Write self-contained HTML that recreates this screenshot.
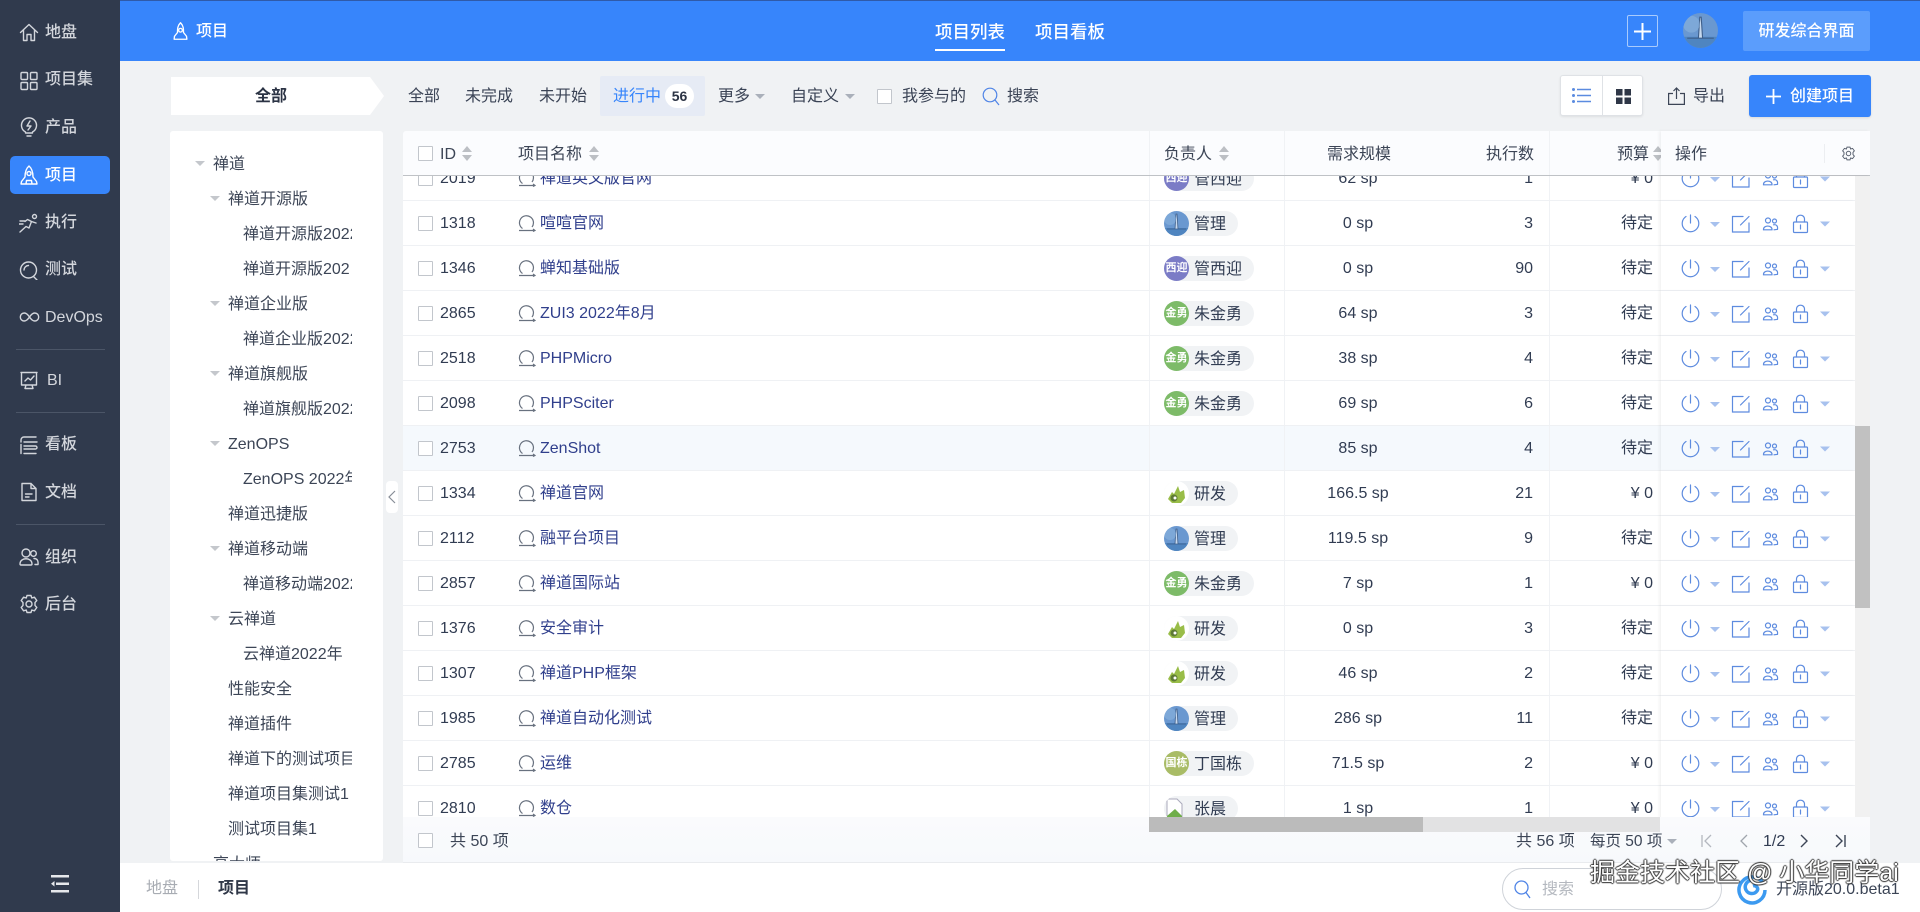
<!DOCTYPE html>
<html lang="zh"><head><meta charset="utf-8"><title>项目</title>
<style>
*{box-sizing:border-box}
html,body{margin:0;padding:0;width:1920px;height:912px;overflow:hidden;background:#f0f2f4;font:16px/1.2 "Liberation Sans","Noto Sans CJK SC",sans-serif;color:#313c52}
.a{position:absolute;white-space:nowrap}
#side{left:0;top:0;width:120px;height:912px;background:#303a4d}
#side .i{position:absolute;left:19px;width:20px;height:20px;fill:none;stroke:#d3d6dc;stroke-width:1.4;stroke-linecap:round;stroke-linejoin:round}
#side .l{position:absolute;left:45px;color:#d3d6dc;font-weight:500;line-height:24px;white-space:nowrap;margin-top:1px}
#side hr{position:absolute;left:16px;width:89px;margin:0;border:0;height:1px;background:#4b5567}
#hd{left:120px;top:0;width:1800px;height:61px;background:#3785fb;border-top:1px solid #2f5aa8}
.w{color:#fff}
.tab{top:19px;color:#fff;font-size:17.5px;font-weight:500;line-height:26px}
.f{top:85px;line-height:24px;color:#3a4355}
.car{position:absolute;width:0;height:0;border-left:5px solid transparent;border-right:5px solid transparent;border-top:5px solid #aab0ba}
.cb{position:absolute;width:15px;height:15px;background:#fff;border:1px solid #c2c6cc;border-radius:1px}
#tree{left:170px;top:131px;width:213px;height:730px;background:#fff;border-radius:3px;overflow:hidden}
#tw{position:absolute;left:0;top:0;width:182px;height:730px;overflow:hidden;padding-top:14.5px}
.t{position:relative;height:35px;line-height:37px;white-space:nowrap;color:#3c4556}
.t.c::before{content:"";position:absolute;top:15px;margin-left:-18px;border-left:5.5px solid transparent;border-right:5.5px solid transparent;border-top:5.5px solid #c4c7cc}
.l0{padding-left:43px}.l1{padding-left:58px}.l2{padding-left:73px}
#thead{left:403px;top:131px;width:1467px;height:45px;background:#fbfcfe;border-bottom:1px solid #bfc2c6;border-radius:3px 3px 0 0}
.th{position:absolute;top:131px;line-height:47px;color:#3c4556;white-space:nowrap}
#tb{left:0;top:176px;width:1855px;height:641px;overflow:hidden;clip-path:inset(0 0 0 403px)}
.r{position:absolute;left:0;width:1855px;height:45px;background:#fff;line-height:46px;white-space:nowrap}
.r::after{content:"";position:absolute;left:403px;right:0;bottom:0;height:1px;background:#eff1f4}
.r>div,.r>svg,.r>a{position:absolute}
.vl{top:0;bottom:0;width:1px;background:#f0f2f5}
.r .cb{left:418px;top:15px}
.id{left:440px}.ni{left:518px;top:13px;width:18px;height:18px}
.nm{left:540px;color:#303f8c;text-decoration:none}
.pill{left:1164px;top:10px;height:25px;line-height:27px;border-radius:13px;background:#f1f3f5;padding:0 12px 0 30px}
.av{left:1164px;top:10px;width:25px;height:25px;border-radius:50%;color:#fff;font-size:11px;font-weight:700;line-height:25px;text-align:center;overflow:hidden}
.sc{left:1284px;width:148px;text-align:center}
.ex{left:1450px;width:83px;text-align:right}
.bu{left:1560px;width:93px;text-align:right}
.op{left:1661px;top:0;width:194px;height:45px;background:#fff;box-shadow:-2px 0 3px rgba(0,0,0,.05);z-index:2;border-bottom:1px solid #eff1f4}
.op svg{position:absolute;left:19px;top:11px;width:150px;height:24px}
.hv{background:#f5f9fd}.hv .op{background:#f5f9fd}
</style></head><body>
<svg width="0" height="0" style="position:absolute">
<symbol id="ops" viewBox="0 0 150 24"><g fill="none" stroke="#5d8bdf" stroke-width="1.200" stroke-linecap="round"><path d="M6 4.500A8.300 8.300 0 1 0 15 4.500M10.500 3V11"/><path d="M63 4.500H52.500V20H69V11M69 4.500L60.500 13"/><circle cx="88" cy="8.500" r="2.500"/><circle cx="94.500" cy="9" r="2"/><path d="M83.500 17.800c-.5-5 9-5 8.500 0zM93.500 12.800c3-.5 4.500 1.200 4 4.500l-3.500.5"/><rect x="113.500" y="10" width="14" height="10.500" rx="1"/><path d="M116.500 10V6.800a4 3.600 0 0 1 8 0V10M120.500 13V17"/></g><path d="M30 10H40L35 15zM140 9.500H150L145 14.500z" fill="#a7c1ee"/></symbol>
<symbol id="ni" viewBox="0 0 18 18"><path d="M4.500 14.500A7 7 0 1 1 14 13M1 16.500H17M15 15l2 1.500-2 1" fill="none" stroke="#68717f" stroke-width="1.200"/></symbol>
<symbol id="sort" viewBox="0 0 10 15"><path d="M5 0L10 6H0zM5 15L0 9H10z" fill="#bcbfc4"/></symbol>
<symbol id="ph" viewBox="0 0 25 25"><rect width="25" height="25" fill="#6a98d0"/><rect y="17" width="25" height="8" fill="#4f85c0"/><path d="M12 3L11 18H14L13 3zM3 18H22" stroke="#3f5f8a" stroke-width=".8" fill="#c7d9ee"/><circle cx="6" cy="8" r="6" fill="#8bb2de" opacity=".6"/></symbol>
<symbol id="dr" viewBox="0 0 25 25"><rect width="25" height="25" fill="#fff"/><path d="M4 18L8 11L10 13L14 5L16 11L20 9L21 17L17 22H8z" fill="#99bd48"/><circle cx="10" cy="17" r="3.500" fill="#5e7a35"/><circle cx="11" cy="17" r="1.500" fill="#fff"/></symbol>
</svg>

<div id="side" class="a">
<svg class="i" style="top:22px" viewBox="0 0 20 20"><path d="M1.500 10.500L10 2.500L18.500 10.500M4.500 8V18.500H8V12.500H12V18.500H15.500V8"/></svg><div class="l" style="top:20px">地盘</div>
<svg class="i" style="top:71px" viewBox="0 0 20 20"><rect x="2" y="1.500" width="6.500" height="7" rx="1"/><rect x="11.500" y="1.500" width="6.500" height="7" rx="1"/><rect x="2" y="11.500" width="6.500" height="7" rx="1"/><rect x="11.500" y="11.500" width="6.500" height="7" rx="1"/></svg><div class="l" style="top:67px">项目集</div>
<svg class="i" style="top:117px" viewBox="0 0 20 20"><path d="M6.500 15A7.500 7.500 0 1 1 13.500 15V16H6.500ZM8 19H12M11 4L8 9H12L9 13"/></svg><div class="l" style="top:115px">产品</div>
<div style="position:absolute;left:10px;top:156px;width:100px;height:38px;background:#3785fb;border-radius:5px"></div>
<svg class="i" style="top:165px;stroke:#fff" viewBox="0 0 20 20"><path d="M10 1C6.500 4 6 8 6 12L2.500 16.500L2 19H18L17.500 16.500L14 12C14 8 13.500 4 10 1ZM7 19L7.500 15.500H12.500L13 19"/><circle cx="10" cy="8.500" r="2"/></svg><div class="l" style="top:163px;color:#fff">项目</div>
<svg class="i" style="top:213px" viewBox="0 0 20 20"><circle cx="15.500" cy="3.500" r="2"/><path d="M1 19L7 13.500L10 15L12.500 8.500L17 10M12.500 8.500L8.500 6.500L6 8.500M1 8H6M0 11H4"/></svg><div class="l" style="top:210px">执行</div>
<svg class="i" style="top:260px" viewBox="0 0 20 20"><circle cx="9.500" cy="10" r="8"/><path d="M14.500 16.500L18 20M5 10A4.500 4.500 0 0 1 9.500 5.500"/></svg><div class="l" style="top:257px">测试</div>
<svg class="i" style="top:307px;width:21px" viewBox="0 0 20 20"><path d="M10 10C8 7 6.500 6 4.800 6a4 4 0 0 0 0 8c1.700 0 3.200-1 5.200-4c2-3 3.500-4 5.200-4a4 4 0 0 1 0 8c-1.700 0-3.200-1-5.200-4z"/></svg><div class="l" style="top:305px;font-weight:400">DevOps</div>
<hr style="top:349px">
<svg class="i" style="top:370px" viewBox="0 0 20 20"><path d="M2 2.500H18M2.500 2.500V15H17.500V2.500M6 11L9 8L11.500 10L15 6M7 15L6 18.500H14L13 15"/></svg><div class="l" style="top:368px;left:47px;font-weight:400">BI</div>
<hr style="top:412px">
<svg class="i" style="top:435px" viewBox="0 0 20 20"><path d="M2 7V5a3 3 0 0 1 3-3H17M2 9.500V18.500M5 7H18M5 11H16.500a1.500 1.500 0 0 1 0 3H5M5 18.500H17"/></svg><div class="l" style="top:432px">看板</div>
<svg class="i" style="top:482px" viewBox="0 0 20 20"><path d="M3 1.500H12L17 6.500V18.500H3ZM12 1.500V6.500H17M6.500 12H13M6.500 15H10"/></svg><div class="l" style="top:480px">文档</div>
<hr style="top:524px">
<svg class="i" style="top:547px" viewBox="0 0 20 20"><circle cx="7" cy="6" r="4"/><path d="M1 17c0-7 12-7 12 0q0 1-1 1H2q-1 0-1-1z"/><circle cx="14.500" cy="6.500" r="2.800"/><path d="M15 11.500c3 0 4.500 2 4 6h-3"/></svg><div class="l" style="top:545px">组织</div>
<svg class="i" style="top:594px" viewBox="0 0 20 20"><path d="M8 1.500H12L12.800 4L15.400 3.200L17.800 6.500L16 8.600L16 11.400L17.800 13.500L15.400 16.800L12.800 16L12 18.500H8L7.200 16L4.600 16.800L2.200 13.500L4 11.400V8.600L2.200 6.500L4.600 3.200L7.200 4Z"/><circle cx="10" cy="10" r="3"/></svg><div class="l" style="top:592px">后台</div>
<svg style="position:absolute;left:51px;top:875px" width="18" height="18" viewBox="0 0 18 18"><path d="M0 0H18V2.500H0zM5 7.500H18V10H5zM0 15H18V17.500H0zM0 8.700L3.500 6V11.500z" fill="#e6e8ec"/></svg>
</div>

<div id="hd" class="a"></div>
<svg class="a" style="left:173px;top:22px;fill:none;stroke:#fff;stroke-width:1.800;stroke-linejoin:round" width="15" height="18" viewBox="0 0 20 24"><path d="M10 1C6 5 6 9 6 14L2 19L1.500 23H18.500L18 19L14 14C14 9 14 5 10 1Z"/><circle cx="10" cy="11" r="2.500"/></svg>
<div class="a w" style="left:196px;top:19px;line-height:26px;font-weight:500">项目</div>
<div class="a tab" style="left:935px">项目列表</div>
<div class="a" style="left:935px;top:49px;width:70px;height:2px;background:#fff"></div>
<div class="a tab" style="left:1035px">项目看板</div>
<div class="a" style="left:1627px;top:15px;width:31px;height:32px;border:1px solid #a9cbfd;border-radius:2px"></div>
<svg class="a" style="left:1634px;top:23px" width="17" height="17"><path d="M8.500 0V17M0 8.500H17" stroke="#fff" stroke-width="2"/></svg>
<svg class="a" style="left:1683px;top:13px;border-radius:50%" width="35" height="35" viewBox="0 0 25 25"><use href="#ph"/></svg>
<div class="a w" style="left:1743px;top:11px;width:127px;height:40px;line-height:41px;background:#5b9dfc;border-radius:2px;text-align:center;font-weight:500">研发综合界面</div>

<div class="a" style="left:171px;top:77px;width:213px;height:38px;background:#fff;clip-path:polygon(0 0,199px 0,100% 50%,199px 100%,0 100%);text-align:center;line-height:40px;padding-right:13px;font-weight:700;color:#2b3344">全部</div>
<div class="a f" style="left:408px">全部</div>
<div class="a f" style="left:465px">未完成</div>
<div class="a f" style="left:539px">未开始</div>
<div class="a" style="left:600px;top:76px;width:105px;height:40px;background:#e6ebf5;border-radius:2px"></div>
<div class="a f" style="left:613px;color:#3785fb">进行中</div>
<div class="a" style="left:665px;top:84px;width:29px;height:24px;border-radius:12px;background:#fff;text-align:center;line-height:24px;font-size:14px;font-weight:700;color:#2b3344">56</div>
<div class="a f" style="left:718px">更多</div><div class="car" style="left:755px;top:94px"></div>
<div class="a f" style="left:791px">自定义</div><div class="car" style="left:845px;top:94px"></div>
<div class="cb" style="left:877px;top:89px"></div>
<div class="a f" style="left:902px">我参与的</div>
<svg class="a" style="left:982px;top:87px" width="18" height="19" fill="none" stroke="#4f84e6" stroke-width="1.200"><circle cx="8" cy="8" r="6.800"/><path d="M13 13L17 18"/></svg>
<div class="a f" style="left:1007px">搜索</div>

<div class="a" style="left:1560px;top:75px;width:83px;height:41px;background:#fff;border:1px solid #dfe2e6;border-radius:3px;box-shadow:0 1px 2px rgba(0,0,0,.08)"></div>
<div class="a" style="left:1602px;top:75px;width:1px;height:41px;background:#dfe2e6"></div>
<svg class="a" style="left:1572px;top:87px" width="19" height="17"><path d="M5 2.500H19M5 8.500H19M5 14.500H19" stroke="#5b8be0" stroke-width="1.500"/><circle cx="1.500" cy="2.500" r="1.500" fill="#5b8be0"/><circle cx="1.500" cy="8.500" r="1.500" fill="#5b8be0"/><circle cx="1.500" cy="14.500" r="1.500" fill="#5b8be0"/></svg>
<svg class="a" style="left:1616px;top:89px" width="15" height="15"><path d="M0 0H6.500V6.500H0zM8.500 0H15V6.500H8.500zM0 8.500H6.500V15H0zM8.500 8.500H15V15H8.500z" fill="#2f3747"/></svg>
<svg class="a" style="left:1668px;top:87px" width="17" height="18" fill="none" stroke="#3c4556" stroke-width="1.200"><path d="M5 6.500H.6V17.400H16.400V6.500H12M8.500 12V1M5.500 4L8.500 1L11.500 4"/></svg>
<div class="a f" style="left:1693px">导出</div>
<div class="a w" style="left:1749px;top:75px;width:122px;height:42px;background:#3785fb;border-radius:3px;box-shadow:0 1px 2px rgba(0,0,0,.1);line-height:44px;padding-left:41px;font-weight:500">创建项目</div>
<svg class="a" style="left:1766px;top:89px" width="15" height="15"><path d="M7.500 0V15M0 7.500H15" stroke="#fff" stroke-width="1.800"/></svg>

<div id="tree" class="a"><div id="tw">
<div class="t c l0">禅道</div>
<div class="t c l1">禅道开源版</div>
<div class="t l2">禅道开源版2022年</div>
<div class="t l2">禅道开源版202</div>
<div class="t c l1">禅道企业版</div>
<div class="t l2">禅道企业版2022年</div>
<div class="t c l1">禅道旗舰版</div>
<div class="t l2">禅道旗舰版2022年</div>
<div class="t c l1">ZenOPS</div>
<div class="t l2">ZenOPS 2022年</div>
<div class="t l1">禅道迅捷版</div>
<div class="t c l1">禅道移动端</div>
<div class="t l2">禅道移动端2022年</div>
<div class="t c l1">云禅道</div>
<div class="t l2">云禅道2022年</div>
<div class="t l1">性能安全</div>
<div class="t l1">禅道插件</div>
<div class="t l1">禅道下的测试项目</div>
<div class="t l1">禅道项目集测试1</div>
<div class="t l1">测试项目集1</div>
<div class="t l0">高大师</div>
</div></div>
<div class="a" style="left:386px;top:481px;width:12px;height:32px;background:#fff;border-radius:4px"></div>
<svg class="a" style="left:388px;top:490px" width="8" height="14" fill="none" stroke="#888e98" stroke-width="1.200"><path d="M7 1L1 7L7 13"/></svg>

<div id="tb" class="a">
<div class="r" style="top:-20px"><div class="cb"></div><div class="id">2019</div><svg class="ni"><use href="#ni"/></svg><a class="nm">禅道英文版官网</a><div class="vl" style="left:1149px"></div><div class="vl" style="left:1284px"></div><div class="vl" style="left:1549px"></div><div class="pill">管西迎</div><div class="av" style="background:#7b7cc6">西迎</div><div class="sc">62 sp</div><div class="ex">1</div><div class="bu">¥ 0</div><div class="op"><svg><use href="#ops"/></svg></div></div>
<div class="r" style="top:25px"><div class="cb"></div><div class="id">1318</div><svg class="ni"><use href="#ni"/></svg><a class="nm">喧喧官网</a><div class="vl" style="left:1149px"></div><div class="vl" style="left:1284px"></div><div class="vl" style="left:1549px"></div><div class="pill">管理</div><svg class="av" viewBox="0 0 25 25"><use href="#ph"/></svg><div class="sc">0 sp</div><div class="ex">3</div><div class="bu">待定</div><div class="op"><svg><use href="#ops"/></svg></div></div>
<div class="r" style="top:70px"><div class="cb"></div><div class="id">1346</div><svg class="ni"><use href="#ni"/></svg><a class="nm">蝉知基础版</a><div class="vl" style="left:1149px"></div><div class="vl" style="left:1284px"></div><div class="vl" style="left:1549px"></div><div class="pill">管西迎</div><div class="av" style="background:#7b7cc6">西迎</div><div class="sc">0 sp</div><div class="ex">90</div><div class="bu">待定</div><div class="op"><svg><use href="#ops"/></svg></div></div>
<div class="r" style="top:115px"><div class="cb"></div><div class="id">2865</div><svg class="ni"><use href="#ni"/></svg><a class="nm">ZUI3 2022年8月</a><div class="vl" style="left:1149px"></div><div class="vl" style="left:1284px"></div><div class="vl" style="left:1549px"></div><div class="pill">朱金勇</div><div class="av" style="background:#7dbb68">金勇</div><div class="sc">64 sp</div><div class="ex">3</div><div class="bu">待定</div><div class="op"><svg><use href="#ops"/></svg></div></div>
<div class="r" style="top:160px"><div class="cb"></div><div class="id">2518</div><svg class="ni"><use href="#ni"/></svg><a class="nm">PHPMicro</a><div class="vl" style="left:1149px"></div><div class="vl" style="left:1284px"></div><div class="vl" style="left:1549px"></div><div class="pill">朱金勇</div><div class="av" style="background:#7dbb68">金勇</div><div class="sc">38 sp</div><div class="ex">4</div><div class="bu">待定</div><div class="op"><svg><use href="#ops"/></svg></div></div>
<div class="r" style="top:205px"><div class="cb"></div><div class="id">2098</div><svg class="ni"><use href="#ni"/></svg><a class="nm">PHPSciter</a><div class="vl" style="left:1149px"></div><div class="vl" style="left:1284px"></div><div class="vl" style="left:1549px"></div><div class="pill">朱金勇</div><div class="av" style="background:#7dbb68">金勇</div><div class="sc">69 sp</div><div class="ex">6</div><div class="bu">待定</div><div class="op"><svg><use href="#ops"/></svg></div></div>
<div class="r hv" style="top:250px"><div class="cb"></div><div class="id">2753</div><svg class="ni"><use href="#ni"/></svg><a class="nm">ZenShot</a><div class="vl" style="left:1149px"></div><div class="vl" style="left:1284px"></div><div class="vl" style="left:1549px"></div><div class="sc">85 sp</div><div class="ex">4</div><div class="bu">待定</div><div class="op"><svg><use href="#ops"/></svg></div></div>
<div class="r" style="top:295px"><div class="cb"></div><div class="id">1334</div><svg class="ni"><use href="#ni"/></svg><a class="nm">禅道官网</a><div class="vl" style="left:1149px"></div><div class="vl" style="left:1284px"></div><div class="vl" style="left:1549px"></div><div class="pill">研发</div><svg class="av" viewBox="0 0 25 25"><use href="#dr"/></svg><div class="sc">166.5 sp</div><div class="ex">21</div><div class="bu">¥ 0</div><div class="op"><svg><use href="#ops"/></svg></div></div>
<div class="r" style="top:340px"><div class="cb"></div><div class="id">2112</div><svg class="ni"><use href="#ni"/></svg><a class="nm">融平台项目</a><div class="vl" style="left:1149px"></div><div class="vl" style="left:1284px"></div><div class="vl" style="left:1549px"></div><div class="pill">管理</div><svg class="av" viewBox="0 0 25 25"><use href="#ph"/></svg><div class="sc">119.5 sp</div><div class="ex">9</div><div class="bu">待定</div><div class="op"><svg><use href="#ops"/></svg></div></div>
<div class="r" style="top:385px"><div class="cb"></div><div class="id">2857</div><svg class="ni"><use href="#ni"/></svg><a class="nm">禅道国际站</a><div class="vl" style="left:1149px"></div><div class="vl" style="left:1284px"></div><div class="vl" style="left:1549px"></div><div class="pill">朱金勇</div><div class="av" style="background:#7dbb68">金勇</div><div class="sc">7 sp</div><div class="ex">1</div><div class="bu">¥ 0</div><div class="op"><svg><use href="#ops"/></svg></div></div>
<div class="r" style="top:430px"><div class="cb"></div><div class="id">1376</div><svg class="ni"><use href="#ni"/></svg><a class="nm">安全审计</a><div class="vl" style="left:1149px"></div><div class="vl" style="left:1284px"></div><div class="vl" style="left:1549px"></div><div class="pill">研发</div><svg class="av" viewBox="0 0 25 25"><use href="#dr"/></svg><div class="sc">0 sp</div><div class="ex">3</div><div class="bu">待定</div><div class="op"><svg><use href="#ops"/></svg></div></div>
<div class="r" style="top:475px"><div class="cb"></div><div class="id">1307</div><svg class="ni"><use href="#ni"/></svg><a class="nm">禅道PHP框架</a><div class="vl" style="left:1149px"></div><div class="vl" style="left:1284px"></div><div class="vl" style="left:1549px"></div><div class="pill">研发</div><svg class="av" viewBox="0 0 25 25"><use href="#dr"/></svg><div class="sc">46 sp</div><div class="ex">2</div><div class="bu">待定</div><div class="op"><svg><use href="#ops"/></svg></div></div>
<div class="r" style="top:520px"><div class="cb"></div><div class="id">1985</div><svg class="ni"><use href="#ni"/></svg><a class="nm">禅道自动化测试</a><div class="vl" style="left:1149px"></div><div class="vl" style="left:1284px"></div><div class="vl" style="left:1549px"></div><div class="pill">管理</div><svg class="av" viewBox="0 0 25 25"><use href="#ph"/></svg><div class="sc">286 sp</div><div class="ex">11</div><div class="bu">待定</div><div class="op"><svg><use href="#ops"/></svg></div></div>
<div class="r" style="top:565px"><div class="cb"></div><div class="id">2785</div><svg class="ni"><use href="#ni"/></svg><a class="nm">运维</a><div class="vl" style="left:1149px"></div><div class="vl" style="left:1284px"></div><div class="vl" style="left:1549px"></div><div class="pill">丁国栋</div><div class="av" style="background:#a9bc66">国栋</div><div class="sc">71.5 sp</div><div class="ex">2</div><div class="bu">¥ 0</div><div class="op"><svg><use href="#ops"/></svg></div></div>
<div class="r" style="top:610px"><div class="cb"></div><div class="id">2810</div><svg class="ni"><use href="#ni"/></svg><a class="nm">数仓</a><div class="vl" style="left:1149px"></div><div class="vl" style="left:1284px"></div><div class="vl" style="left:1549px"></div><div class="pill">张晨</div><svg class="av" viewBox="0 0 25 25"><rect width="25" height="25" fill="#f1f3f5"/><path d="M3 3H13L18 8V25H3Z" fill="#fff" stroke="#aab"/><path d="M3 20L11 13L18 20V25H3Z" fill="#6fae4a"/></svg><div class="sc">1 sp</div><div class="ex">1</div><div class="bu">¥ 0</div><div class="op"><svg><use href="#ops"/></svg></div></div>
</div>
<div class="a" style="left:1855px;top:176px;width:15px;height:641px;background:#f1f1f1"></div>
<div class="a" style="left:1855px;top:426px;width:15px;height:182px;background:#c1c1c1"></div>

<div id="thead" class="a"></div>
<div class="a" style="left:1149px;top:131px;width:1px;height:44px;background:#f0f2f5"></div>
<div class="a" style="left:1284px;top:131px;width:1px;height:44px;background:#f0f2f5"></div>
<div class="a" style="left:1549px;top:131px;width:1px;height:44px;background:#f0f2f5"></div>
<div class="cb" style="left:418px;top:146px"></div>
<div class="th" style="left:440px">ID</div><svg class="a" style="left:462px;top:146px" width="10" height="15"><use href="#sort"/></svg>
<div class="th" style="left:518px">项目名称</div><svg class="a" style="left:589px;top:146px" width="10" height="15"><use href="#sort"/></svg>
<div class="th" style="left:1164px">负责人</div><svg class="a" style="left:1219px;top:146px" width="10" height="15"><use href="#sort"/></svg>
<div class="th" style="left:1327px">需求规模</div>
<div class="th" style="left:1486px">执行数</div>
<div class="th" style="left:1617px">预算</div><svg class="a" style="left:1653px;top:146px" width="10" height="15"><use href="#sort"/></svg>
<div class="a" style="left:1661px;top:131px;width:209px;height:44px;background:#fbfcfe;box-shadow:-2px 0 3px rgba(0,0,0,.05)"></div>
<div class="th" style="left:1675px">操作</div>
<div class="a" style="left:1824px;top:144px;width:1px;height:19px;background:#eceef1"></div>
<svg class="a" style="left:1841px;top:146px;fill:none;stroke:#5a6270;stroke-width:1.300" width="15" height="15" viewBox="0 0 20 20"><path d="M8 1.500H12L12.800 4L15.400 3.200L17.800 6.500L16 8.600L16 11.400L17.800 13.500L15.400 16.800L12.800 16L12 18.500H8L7.200 16L4.600 16.800L2.200 13.500L4 11.400V8.600L2.200 6.500L4.600 3.200L7.200 4Z"/><circle cx="10" cy="10" r="3"/></svg>

<div class="a" style="left:403px;top:817px;width:1467px;height:46px;background:linear-gradient(#fafbfd,#f7f9fc);border-bottom:1px solid #e9ebee"></div>
<div class="a" style="left:1149px;top:817px;width:511px;height:15px;background:#e2e2e3"></div>
<div class="a" style="left:1149px;top:817px;width:274px;height:15px;background:#bbb"></div>
<div class="cb" style="left:418px;top:833px"></div>
<div class="a" style="left:450px;top:830px;line-height:24px;color:#3c4556">共 50 项</div>
<div class="a" style="left:1516px;top:830px;line-height:24px;color:#3c4556">共 56 项</div>
<div class="a" style="left:1590px;top:830px;line-height:24px;font-size:15.500px;color:#3c4556">每页 50 项</div>
<div class="car" style="left:1667px;top:839px"></div>
<svg class="a" style="left:1700px;top:832px;fill:none;stroke:#b4b8bf;stroke-width:1.300" width="14" height="18"><path d="M2 3V15M11 3L5 9L11 15"/></svg>
<svg class="a" style="left:1739px;top:832px;fill:none;stroke:#a0a5ad;stroke-width:1.300" width="10" height="18"><path d="M8 3L2 9L8 15"/></svg>
<div class="a" style="left:1763px;top:830px;line-height:24px">1/2</div>
<svg class="a" style="left:1799px;top:832px;fill:none;stroke:#3c4556;stroke-width:1.400" width="10" height="18"><path d="M2 3L8 9L2 15"/></svg>
<svg class="a" style="left:1833px;top:832px;fill:none;stroke:#3c4556;stroke-width:1.400" width="14" height="18"><path d="M12 3V15M3 3L9 9L3 15"/></svg>

<div class="a" style="left:120px;top:863px;width:1800px;height:49px;background:#fff"></div>
<div class="a" style="left:146px;top:877px;line-height:24px;color:#a8acb3">地盘</div>
<div class="a" style="left:198px;top:880px;width:1px;height:19px;background:#d5d7db"></div>
<div class="a" style="left:218px;top:877px;line-height:24px;font-weight:700;color:#2f3747">项目</div>
<div class="a" style="left:1502px;top:868px;width:220px;height:42px;border:1px solid #cfd3d9;border-radius:21px;background:#fff"></div>
<svg class="a" style="left:1514px;top:880px" width="17" height="19" fill="none" stroke="#4f84e6" stroke-width="1.300"><circle cx="7.500" cy="7.500" r="6.500"/><path d="M12 12.500L16 18"/></svg>
<div class="a" style="left:1542px;top:878px;line-height:24px;color:#b4b8bf">搜索</div>
<svg class="a" style="left:1737px;top:875px" width="30" height="30" viewBox="0 0 30 30" fill="none" stroke="#3c9af0" stroke-width="3.500"><path d="M26 8A13 13 0 1 0 28 15M15 5C9 6 7 11 9 15C11 19 17 20 20 16C22 13 19 10 16 11"/></svg>
<div class="a" style="left:1776px;top:878px;line-height:24px;color:#3c4556">开源版20.0.beta1</div>
<div class="a" style="left:1590px;top:858px;font-size:25px;line-height:30px;color:#fff;text-shadow:1px 0 1px #333,-1px 0 1px #333,0 1px 1px #333,0 -1px 1px #333">掘金技术社区 @ 小华同学ai</div>
</body></html>
